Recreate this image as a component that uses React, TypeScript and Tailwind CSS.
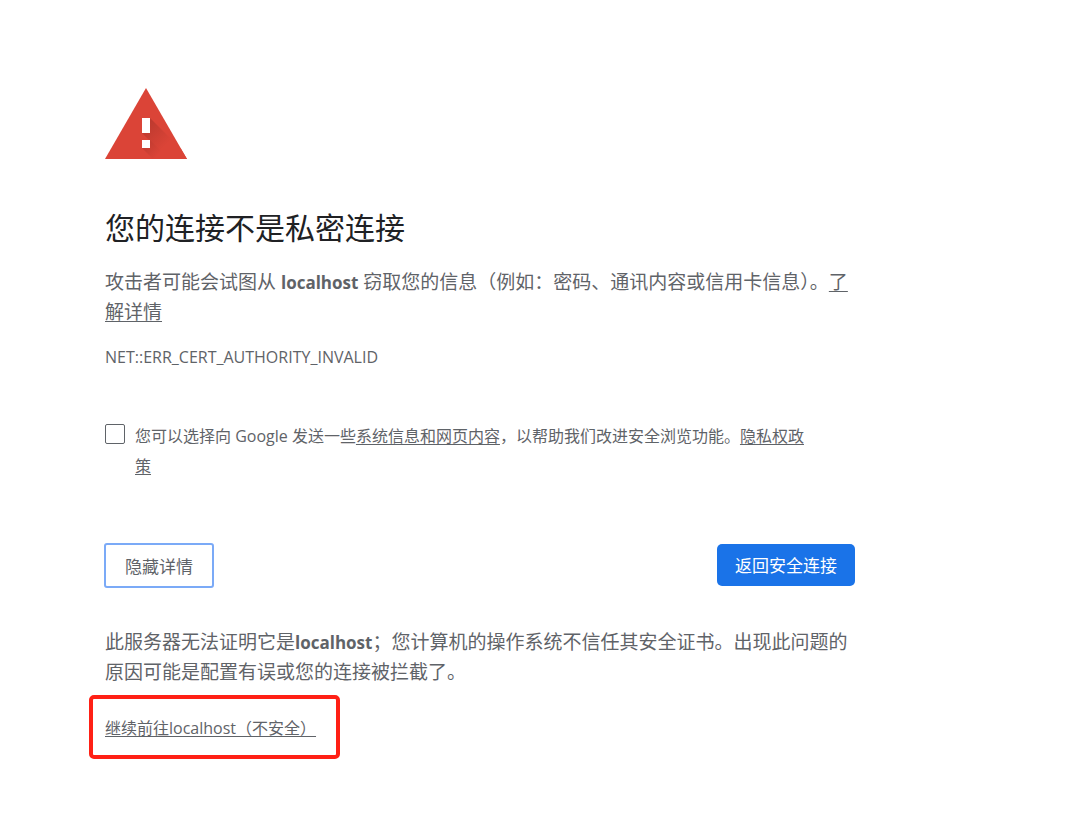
import React from "react";

function WarningIcon() {
  return (
    <svg width="82" height="71" viewBox="0 0 82 71" aria-hidden="true">
      <defs>
        <linearGradient id="shade" gradientUnits="userSpaceOnUse" x1="40" y1="38" x2="60" y2="58">
          <stop offset="0" stopColor="#bd3a2f" />
          <stop offset="1" stopColor="#db4437" />
        </linearGradient>
        <linearGradient id="shadeDot" gradientUnits="userSpaceOnUse" x1="38" y1="54" x2="52" y2="68">
          <stop offset="0" stopColor="#bd3a2f" />
          <stop offset="1" stopColor="#db4437" />
        </linearGradient>
      </defs>
      <path d="M41 0L82 71H0z" fill="#db4437" />
      <path d="M45 30L76 61L82 71H63L37 45z" fill="url(#shade)" />
      <path d="M45 52L64 71H48L37 60z" fill="url(#shadeDot)" />
      <path d="M37 30h8v15h-8zM37 52h8v8h-8z" fill="#fff" />
    </svg>
  );
}

const linkClass = "underline underline-offset-2 decoration-1";

export default function App() {
  return (
    <main
      lang="zh-CN"
      className="min-h-screen bg-white pt-[88px] pb-16 pl-[105px] pr-8 font-['Open_Sans','Noto_Sans_CJK_SC',sans-serif] text-[#5f6368]"
    >
      <div className="max-w-[750px]">
        <WarningIcon />
        <h1 className="mt-[49px] text-[30px] leading-[40px] font-normal text-[#202124]">
          您的连接不是私密连接
        </h1>
        <p className="mt-[19px] text-[19px] leading-[30px]">
          攻击者可能会试图从 <strong className="text-[17px] leading-none font-bold">localhost</strong>{" "}
          窃取您的信息（例如：密码、通讯内容或信用卡信息）。
          <a href="#learn" className={linkClass}>了解详情</a>
        </p>
        <p className="mt-5 text-[16px] leading-[20px]">NET::ERR_CERT_AUTHORITY_INVALID</p>

        <div className="mt-[54px] flex gap-[10px]">
          <input
            id="report"
            type="checkbox"
            className="mt-[3px] size-5 shrink-0 appearance-none rounded-[2px] border border-[#5f6368] bg-white checked:bg-[#1a73e8]"
          />
          <label htmlFor="report" className="text-[16px] leading-[30px]">
            您可以选择向 Google 发送一些
            <a href="#data" className={linkClass}>系统信息和网页内容</a>
            ，以帮助我们改进安全浏览功能。
            <a href="#privacy" className={linkClass}>隐私权政<br />策</a>
          </label>
        </div>

        <div className="mt-[62px] flex items-start justify-between">
          <button
            type="button"
            className="-ml-px rounded-[3px] border-2 border-[#7baaf7] bg-white px-[19px] pt-[9px] pb-[7px] text-[17px] leading-[25px]"
          >
            隐藏详情
          </button>
          <button
            type="button"
            className="mt-px rounded-[5px] bg-[#1a73e8] px-[18px] pt-[9px] pb-[7px] text-[17px] leading-[26px] text-white"
          >
            返回安全连接
          </button>
        </div>

        <p className="mt-[39px] text-[19px] leading-[30px]">
          此服务器无法证明它是<strong className="text-[17px] leading-none font-bold">localhost</strong>
          ；您计算机的操作系统不信任其安全证书。出现此问题的原因可能是配置有误或您的连接被拦截了。
        </p>
        <div className="mt-2 -ml-4 w-fit rounded-[5px] border-4 border-[#ff2015] pt-[14px] pr-5 pb-3 pl-3">
          <a href="#proceed" className="block text-[16px] leading-[30px] underline underline-offset-2">
            继续前往localhost（不安全）
          </a>
        </div>
      </div>
    </main>
  );
}
